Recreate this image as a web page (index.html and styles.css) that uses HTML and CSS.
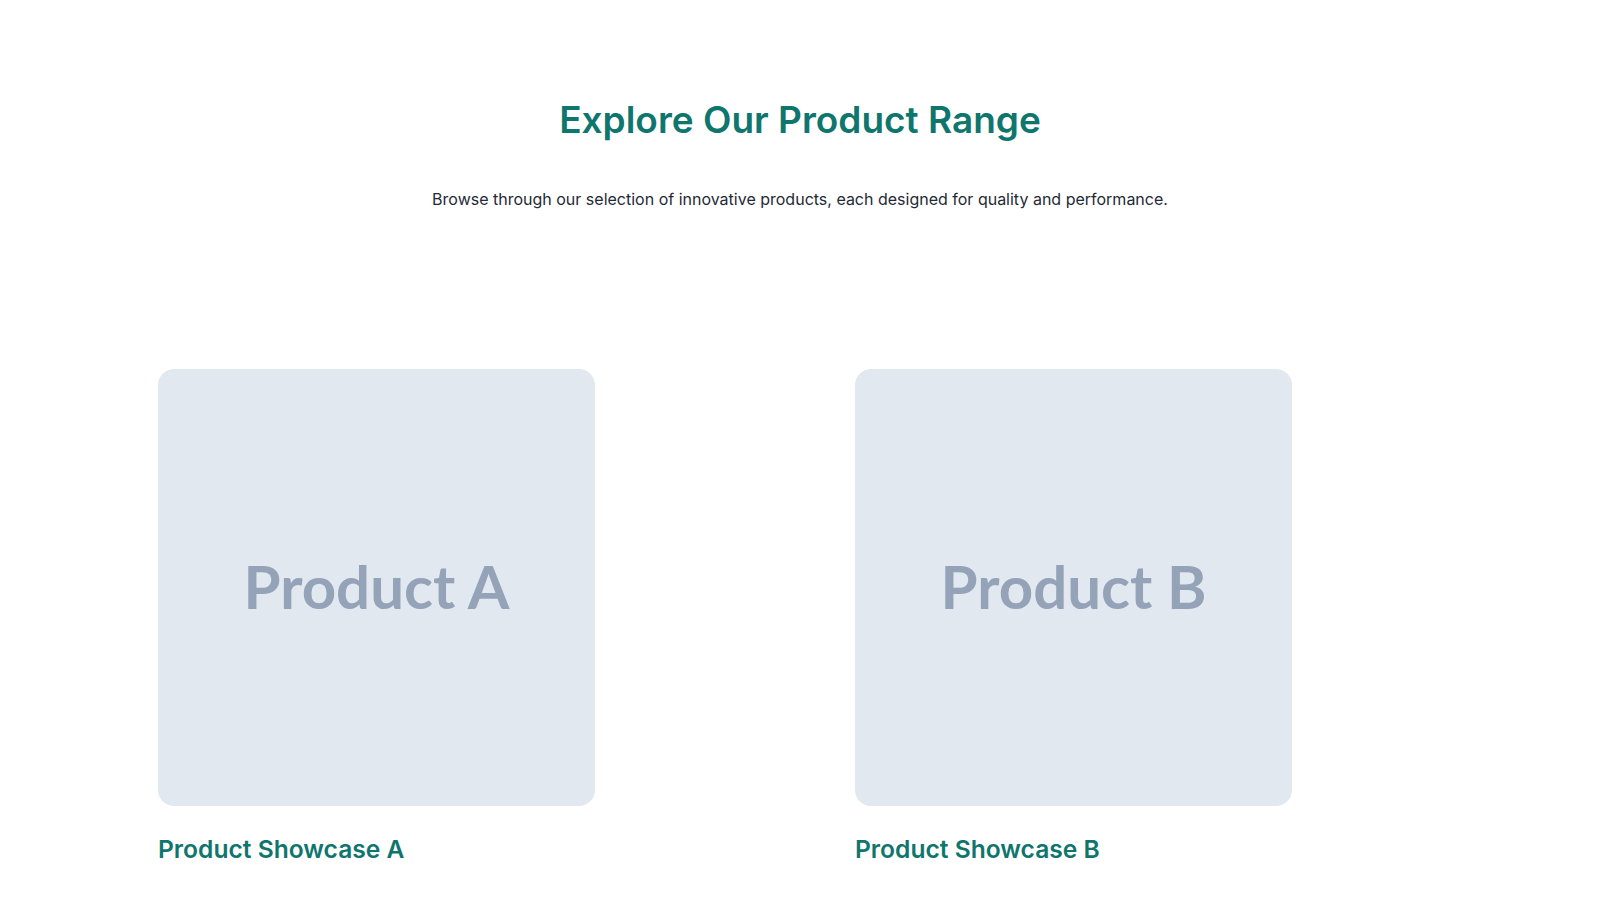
FILE: index.html
```html
<!DOCTYPE html>
<html lang="en">
<head>
  <meta charset="UTF-8" />
  <meta name="viewport" content="width=device-width, initial-scale=1.0"/>
  <title>Products</title>
  <link rel="stylesheet" href="styles.css">
</head>
<body>

  <section class="products">
    <header class="products-head">
      <h2>Explore Our Product Range</h2>
      <p>Browse through our selection of innovative products, each designed for quality and performance.</p>
    </header>

    <!-- Product grid -->
    <div class="product-grid">
      <div class="product-card">
        <div class="product-img">Product A</div>
        <h3>Product Showcase A</h3>
      </div>
      <div class="product-card">
        <div class="product-img">Product B</div>
        <h3>Product Showcase B</h3>
      </div>
    </div>
  </section>

</body>
</html>
```

FILE: styles.css
```css
body {
  margin: 0;
  font-family: Inter, "Noto Sans", sans-serif;
  background: #fff;
  color: #1f2937;
}

.products {
  max-width: 1284px;
  margin: 0 auto;
  padding-top: 96px;
}

.products-head {
  text-align: center;
}

.products-head h2 {
  margin: 0;
  font-size: 37px;
  font-weight: 600;
  color: #0f766e;
  line-height: 48px;
}

.products-head p {
  margin: 43px 0 0;
  font-size: 16px;
  line-height: 24px;
  color: #1f2937;
}

.product-grid {
  display: grid;
  grid-template-columns: 587px 587px;
  gap: 110px;
  margin-top: 158px;
}

.product-img {
  width: 437px;
  height: 437px;
  box-sizing: border-box;
  padding-bottom: 4px;
  background: #e2e8f0;
  border-radius: 16px;
  display: flex;
  align-items: center;
  justify-content: center;
  font-family: Lato, sans-serif;
  font-weight: 700;
  font-size: 60px;
  color: #94a3b8;
}

.product-card h3 {
  margin: 28px 0 0;
  font-size: 24.6px;
  font-weight: 600;
  color: #0f766e;
}
```
